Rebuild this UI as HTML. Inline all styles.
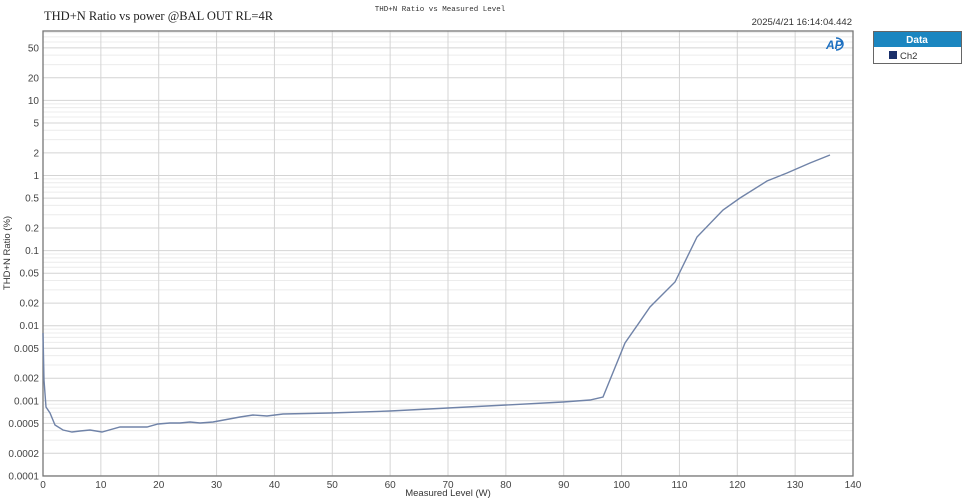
<!DOCTYPE html>
<html><head><meta charset="utf-8"><style>
body{margin:0;width:967px;height:500px;background:#fff;overflow:hidden;position:relative;font-family:"Liberation Sans",sans-serif}
</style></head><body>
<svg width="967" height="500" style="position:absolute;left:0;top:0" xmlns="http://www.w3.org/2000/svg">
<g id="grid"></g>
<rect x="43" y="31" width="810" height="445" fill="none" stroke="#777" stroke-width="1.3"/>
<polyline fill="none" stroke="#7083a8" stroke-width="1.4" points="43,333 44,380 46,407 50,413 55,425 63,430 72,432 80,431 90,430 102,432 120,427 147,427 158,424 170,423 180,423 190,422 200,423 213,422 240,417 253,415 267,416 283,414 330,413 390,411 448,408 506,405 563,402 590,400 603,397 625,343 650,307 675,282 697,237 723,210 740,198 767,181 787,173 810,163 830,155"/>
<g id="lbl" font-family="Liberation Sans, sans-serif" font-size="10" fill="#444"></g>
<text x="44" y="20" font-family="Liberation Serif, serif" font-size="12.5" fill="#222">THD+N Ratio vs power @BAL OUT RL=4R</text>
<text x="440" y="11" font-family="Liberation Mono, monospace" font-size="7.5" fill="#333" text-anchor="middle">THD+N Ratio vs Measured Level</text>
<text x="852" y="25" font-size="9.5" fill="#333" text-anchor="end" font-family="Liberation Sans, sans-serif">2025/4/21 16:14:04.442</text>
<text x="448" y="496" font-size="9.5" fill="#333" text-anchor="middle" font-family="Liberation Sans, sans-serif">Measured Level (W)</text>
<text transform="translate(10,253) rotate(-90)" font-size="9.5" fill="#333" text-anchor="middle" font-family="Liberation Sans, sans-serif">THD+N Ratio (%)</text>
<text x="826" y="49" font-size="12" font-style="italic" font-weight="bold" fill="#1c6fc0" font-family="Liberation Sans, sans-serif">AP</text>
<path d="M836,38 a7,6 0 0 1 0,12" fill="none" stroke="#1c6fc0" stroke-width="1.5"/>
<rect x="873.5" y="31.5" width="88" height="32" fill="#fff" stroke="#666"/>
<rect x="874" y="32" width="87" height="15" fill="#1b86c0"/>
<text x="917" y="43" font-size="10" font-weight="bold" fill="#fff" text-anchor="middle">Data</text>
<rect x="889" y="51" width="8" height="8" fill="#1a2f6a"/>
<text x="900" y="59" font-size="9.5" fill="#333">Ch2</text>
</svg>
<script>
var g=document.getElementById('grid'),l=document.getElementById('lbl'),ns='http://www.w3.org/2000/svg';
function Y(v){return 175.5-75.1*Math.log10(v);}
function line(x1,y1,x2,y2,c){var e=document.createElementNS(ns,'line');e.setAttribute('x1',x1);e.setAttribute('y1',y1);e.setAttribute('x2',x2);e.setAttribute('y2',y2);e.setAttribute('stroke',c);e.setAttribute('stroke-width','1');g.appendChild(e);}
function txt(x,y,s,a){var e=document.createElementNS(ns,'text');e.setAttribute('x',x);e.setAttribute('y',y);e.setAttribute('text-anchor',a);e.textContent=s;l.appendChild(e);}
for(var d=-4;d<=1;d++){for(var m=1;m<10;m++){var v=m*Math.pow(10,d),y=Y(v);if(y<32||y>476)continue;var major=(m==1||m==2||m==5);line(43,y,853,y,major?'#d4d4d4':'#ececec');if(major){var s=String(+v.toPrecision(1));txt(39,y+3.5,s,'end');}}}
for(var i=0;i<=14;i++){var x=43+i*810/14;if(i>0&&i<14)line(x,31,x,476,'#d4d4d4');txt(x,488,String(i*10),'middle');}
</script>
</body></html>
